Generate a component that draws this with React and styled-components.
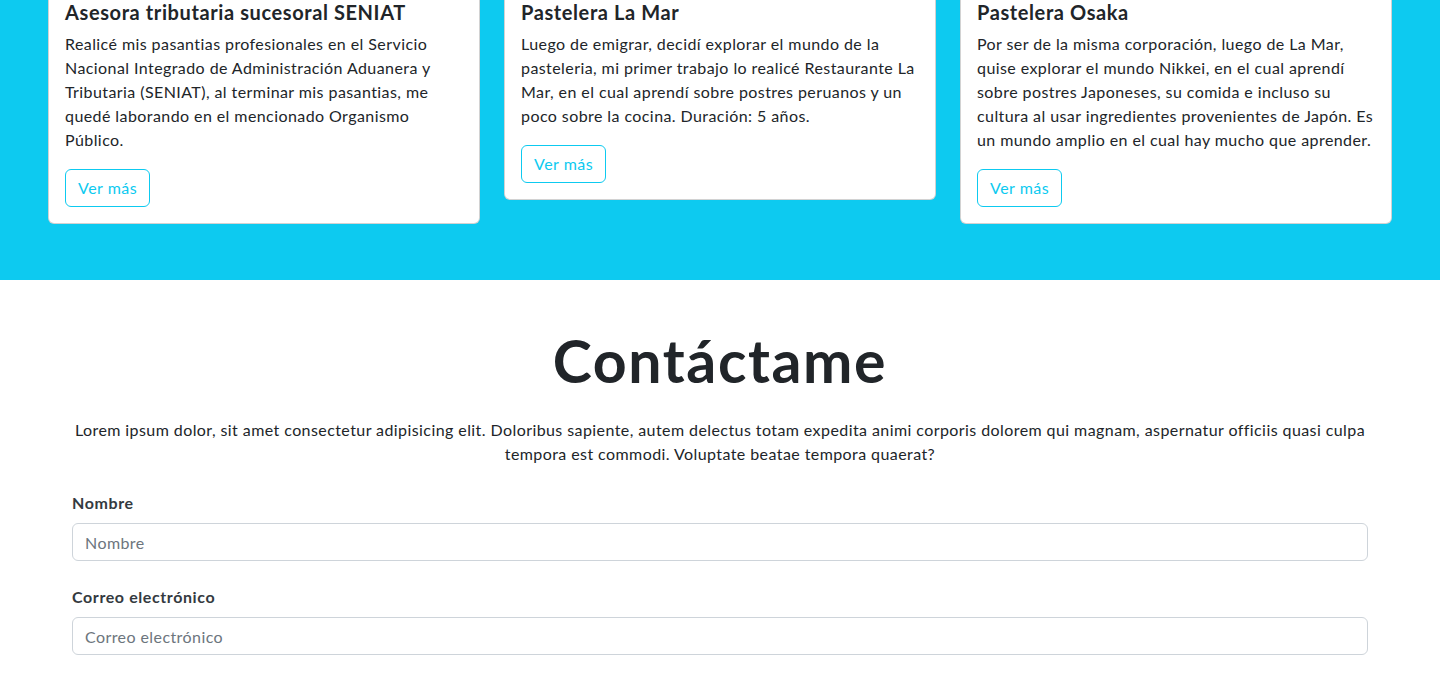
import React from "react";
import styled, { createGlobalStyle } from "styled-components";

const GlobalStyle = createGlobalStyle`
  *, *::before, *::after { box-sizing: border-box; }
  body {
    margin: 0;
    font-family: Lato, "Open Sans", sans-serif;
    font-size: 16px;
    line-height: 1.5;
    letter-spacing: 0.42px;
    color: #212529;
    background: #fff;
  }
`;

const TopEdge = styled.div`
  height: 1px;
  background: #212529;
`;

const ExperienceSection = styled.section`
  background: #0dcaf0;
  padding: 0 48px 56px;
`;

const CardGrid = styled.div`
  display: grid;
  grid-template-columns: repeat(3, 1fr);
  gap: 24px;
  align-items: start;
  margin-top: -18px;
`;

const Card = styled.article`
  background: #fff;
  border: 1px solid rgba(0, 0, 0, 0.175);
  border-radius: 6px;
  padding: 16px;
`;

const CardTitle = styled.h5`
  margin: 0 0 8px;
  font-size: 20px;
  font-weight: 700;
  line-height: 1.2;
  letter-spacing: 0.6px;
  color: #212529;
`;

const CardText = styled.p`
  margin: 0 0 17px;
  font-size: 16px;
  line-height: 24px;
`;

const OutlineButton = styled.button`
  font-family: inherit;
  font-size: 16px;
  line-height: 24px;
  letter-spacing: 0.5px;
  padding: 6px 12px;
  color: #0dcaf0;
  background: transparent;
  border: 1px solid #0dcaf0;
  border-radius: 6px;
  cursor: pointer;
`;

const ContactSection = styled.section`
  padding: 47px 0 48px;
`;

const Container = styled.div`
  max-width: 1320px;
  margin: 0 auto;
  padding: 0 12px;
`;

const Heading = styled.h1`
  margin: 0 0 24px;
  text-align: center;
  font-size: 59px;
  font-weight: 700;
  line-height: 67px;
  letter-spacing: 1.6px;
  color: #212529;
`;

const Lead = styled.p`
  margin: 0 0 25px;
  text-align: center;
`;

const Field = styled.div`
  margin-bottom: 24px;
`;

const Label = styled.label`
  display: block;
  margin-bottom: 8px;
  font-weight: 700;
  letter-spacing: 0.6px;
  color: #343a40;
`;

const Input = styled.input`
  display: block;
  width: 100%;
  height: 38px;
  padding: 6px 12px;
  font-family: inherit;
  font-size: 16px;
  line-height: 24px;
  letter-spacing: 0.42px;
  color: #212529;
  background: #fff;
  border: 1px solid #ced4da;
  border-radius: 6px;
  &::placeholder { color: #6c757d; }
`;

const jobs = [
  {
    title: "Asesora tributaria sucesoral SENIAT",
    text: "Realicé mis pasantias profesionales en el Servicio Nacional Integrado de Administración Aduanera y Tributaria (SENIAT), al terminar mis pasantias, me quedé laborando en el mencionado Organismo Público.",
  },
  {
    title: "Pastelera La Mar",
    text: "Luego de emigrar, decidí explorar el mundo de la pasteleria, mi primer trabajo lo realicé Restaurante La Mar, en el cual aprendí sobre postres peruanos y un poco sobre la cocina. Duración: 5 años.",
  },
  {
    title: "Pastelera Osaka",
    text: "Por ser de la misma corporación, luego de La Mar, quise explorar el mundo Nikkei, en el cual aprendí sobre postres Japoneses, su comida e incluso su cultura al usar ingredientes provenientes de Japón. Es un mundo amplio en el cual hay mucho que aprender.",
  },
];

export default function App() {
  return (
    <>
      <GlobalStyle />
      <TopEdge />
      <ExperienceSection>
        <CardGrid>
          {jobs.map((j) => (
            <Card key={j.title}>
              <CardTitle>{j.title}</CardTitle>
              <CardText>{j.text}</CardText>
              <OutlineButton type="button">Ver más</OutlineButton>
            </Card>
          ))}
        </CardGrid>
      </ExperienceSection>
      <ContactSection>
        <Container>
          <Heading>Contáctame</Heading>
          <Lead>
            Lorem ipsum dolor, sit amet consectetur adipisicing elit. Doloribus sapiente, autem delectus totam expedita animi corporis dolorem qui magnam, aspernatur officiis quasi culpa tempora est commodi. Voluptate beatae tempora quaerat?
          </Lead>
          <Field>
            <Label htmlFor="nombre">Nombre</Label>
            <Input id="nombre" type="text" placeholder="Nombre" />
          </Field>
          <Field>
            <Label htmlFor="correo">Correo electrónico</Label>
            <Input id="correo" type="email" placeholder="Correo electrónico" />
          </Field>
        </Container>
      </ContactSection>
    </>
  );
}
